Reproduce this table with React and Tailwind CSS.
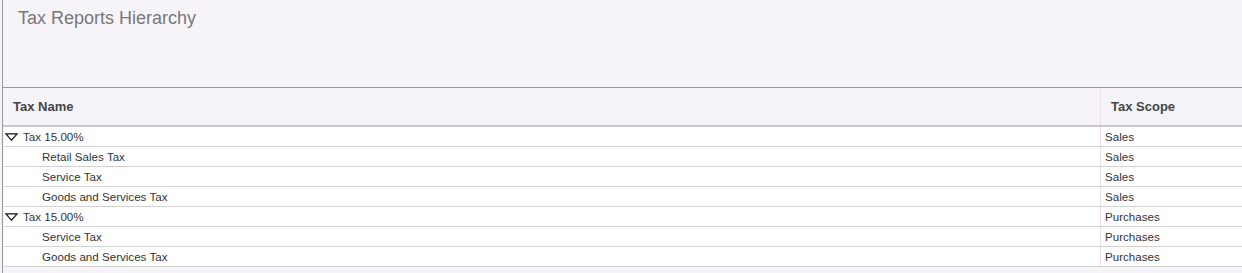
import React from "react";

const rows = [
  { name: "Tax 15.00%", scope: "Sales", parent: true },
  { name: "Retail Sales Tax", scope: "Sales" },
  { name: "Service Tax", scope: "Sales" },
  { name: "Goods and Services Tax", scope: "Sales" },
  { name: "Tax 15.00%", scope: "Purchases", parent: true },
  { name: "Service Tax", scope: "Purchases" },
  { name: "Goods and Services Tax", scope: "Purchases" },
];

function Tri() {
  return (
    <svg width="13" height="8" viewBox="0 0 13 8" className="shrink-0">
      <path d="M0.8 0.8 H12.2 L6.5 7.2 Z" fill="none" stroke="#111" strokeWidth="1.2" strokeLinejoin="miter" />
    </svg>
  );
}

export default function App() {
  return (
    <div className="w-full h-[273px] bg-[#f7f4f9] overflow-hidden" style={{ fontFamily: '"Liberation Sans", Arial, sans-serif' }}>
      <div className="ml-[2px] h-full border-l border-[#9a9a9a] flex flex-col">
        <div className="h-[88px] shrink-0 border-b border-[#9a9a9a] pl-[15px] pt-[7px]">
          <h1 className="text-[18px] leading-[22px] text-[#777]">Tax Reports Hierarchy</h1>
        </div>
        <div className="flex h-[39px] shrink-0 border-b-2 border-[#c8c8c8]">
          <div className="w-[1097px] pl-[10px] flex items-center text-[13px] font-bold text-[#444]">Tax Name</div>
          <div className="flex-1 border-l border-[#f0dcef] pl-[10px] flex items-center text-[13px] font-bold text-[#444]">Tax Scope</div>
        </div>
        <div className="ml-[1px] bg-white">
          {rows.map((r, i) => (
            <div key={i} className="flex h-[20px] border-b border-[#d2d2d2] text-[11.6px] text-[#333]">
              <div className={`w-[1096px] flex items-center ${r.parent ? "pl-[1px] gap-[5px]" : "pl-[38px]"}`}>
                {r.parent && <Tri />}
                <span>{r.name}</span>
              </div>
              <div className="flex-1 border-l border-[#f0dcef] pl-[4px] flex items-center">{r.scope}</div>
            </div>
          ))}
        </div>
      </div>
    </div>
  );
}
